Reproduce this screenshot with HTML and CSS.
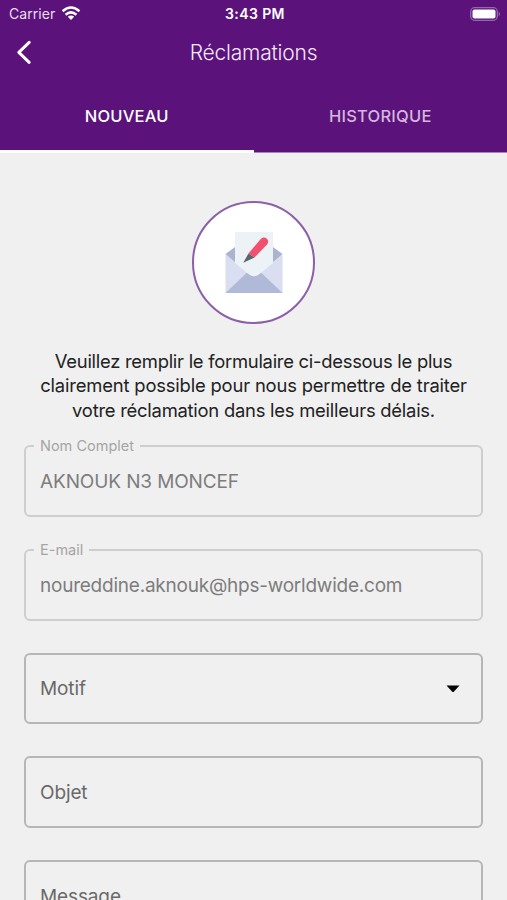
FILE: index.html
```html
<!DOCTYPE html>
<html lang="fr">
<head>
<meta charset="utf-8">
<title>Réclamations</title>
<link rel="stylesheet" href="styles.css">
</head>
<body>
<header class="header">
  <div class="status">
    <div class="carrier"><span class="carrier-name">Carrier</span>
      <svg class="wifi" width="20" height="15" viewBox="0 0 20 15" fill="none" stroke="#fff" stroke-width="2.5"><path d="M1.6 5.2Q10-2.1 18.4 5.2M4.6 8.7Q10 4.1 15.4 8.7"/><path d="M6.8 10.7Q10 8.3 13.2 10.7L10 14Z" fill="#fff" stroke="none"/></svg>
    </div>
    <span class="time">3:43 PM</span>
    <svg class="battery" width="31" height="14" viewBox="0 0 31 14"><rect x=".7" y=".7" width="26.6" height="12.6" rx="4" fill="none" stroke="#9468ad" stroke-width="1.3"/><rect x="2.5" y="2.5" width="23" height="9" rx="2" fill="#fff"/><path d="M28.7 4.5Q31.3 7 28.7 9.5Z" fill="#9468ad"/></svg>
  </div>
  <div class="navbar">
    <svg class="back" width="16" height="26" viewBox="0 0 16 26" fill="none" stroke="#fff" stroke-width="3" stroke-linecap="round" stroke-linejoin="round"><path d="M13.2 2.3L2.8 12.3L13.2 22.3"/></svg>
    <h1 class="title">Réclamations</h1>
  </div>
  <nav class="tabs">
    <a class="tab active">NOUVEAU</a>
    <a class="tab">HISTORIQUE</a>
  </nav>
</header>
<main class="content">
  <div class="badge">
    <svg width="58" height="62" viewBox="0 0 58 62"><path d="M.5 22L10 15V32ZM57.5 22L48 15V32Z" fill="#abb3d0"/><path d="M.5 22L24 42L8 56L.5 61ZM57.5 22L34 42L50 56L57.5 61Z" fill="#d9def0"/><path d="M.5 61L21.5 41H36.5L57.5 61Z" fill="#b0bad8"/><path d="M10 0H48V31L34.5 42Q29 46.5 23.5 42L10 31Z" fill="#edf2f6"/><path d="M23.5 21.5L35.5 7.2C39.5 2.8 46 8 41.8 12.8L29.5 25.5Z" fill="#f2506f"/><path d="M18.3 30.7L23.5 21.5L29.5 25.5Z" fill="#5c656c"/></svg>
  </div>
  <p class="intro"><span class="line line-a">Veuillez remplir le formulaire ci-dessous le plus</span><span class="line line-b">clairement possible pour nous permettre de traiter</span><span class="line line-c">votre réclamation dans les meilleurs délais.</span></p>
  <form class="form">
    <div class="field disabled"><label class="label">Nom Complet</label><span class="value">AKNOUK N3 MONCEF</span></div>
    <div class="field disabled"><label class="label">E-mail</label><span class="value mail">noureddine.aknouk@hps-worldwide.com</span></div>
    <div class="field"><span class="value">Motif</span><svg class="caret" width="14" height="8" viewBox="0 0 14 8"><path d="M.5.5H13.5L8 6.6Q7 7.6 6 6.6Z"/></svg></div>
    <div class="field"><span class="value">Objet</span></div>
    <div class="field"><span class="value">Message</span></div>
  </form>
</main>
</body>
</html>
```
FILE: styles.css
```css
* { box-sizing: border-box; }
body {
  margin: 0;
  height: 900px;
  overflow: hidden;
  background: #f0f0f0;
  font-family: Inter, "Liberation Sans", sans-serif;
}
.header {
  height: 153px;
  background: #5c127b;
  color: #fff;
}
.status {
  display: grid;
  grid-template-columns: 1fr auto 1fr;
  align-items: center;
  height: 27px;
  padding: 0 6px 0 9px;
}
.carrier { display: flex; align-items: center; gap: 6px; }
.carrier-name { font-size: 14px; letter-spacing: .05px; color: #eadff0; }
.time { font-size: 14px; font-weight: 600; letter-spacing: .4px; }
.battery { justify-self: end; }
.navbar {
  display: grid;
  grid-template-columns: 16px 1fr 16px;
  align-items: center;
  height: 51px;
  padding: 0 16px;
}
.title {
  margin: 0;
  text-align: center;
  font-size: 21px;
  font-weight: 300;
  letter-spacing: -.2px;
  color: #f3eaf7;
}
.tabs { display: grid; grid-template-columns: 1fr 1fr; height: 75px; }
.tab {
  display: flex;
  align-items: center;
  justify-content: center;
  padding-top: 1px;
  color: #d3b7de;
  font-size: 16.5px;
  font-weight: 500;
  letter-spacing: .22px;
  border-bottom: 1px solid #a982ba;
}
.tab.active { padding-top: 3px; color: #fff; border-bottom: 3px solid #fff; }
.content { padding: 48px 24px 0; }
.badge {
  display: flex;
  align-items: center;
  justify-content: center;
  width: 123px;
  height: 123px;
  margin: 0 auto;
  border: 2px solid #8c5fa9;
  border-radius: 50%;
  background: #fff;
}
.intro {
  margin: 25px 0 0;
  height: 96px;
  color: #222;
  text-align: center;
  font-size: 18.4px;
  line-height: 24.3px;
}
.line { display: block; white-space: nowrap; }
.line-a { letter-spacing: -.26px; }
.line-b { letter-spacing: -.17px; }
.line-c { letter-spacing: -.24px; }
.form { display: grid; gap: 32px; }
.field {
  position: relative;
  display: flex;
  align-items: center;
  justify-content: space-between;
  height: 71.8px;
  padding: 1px 21px 0 14px;
  border: 2px solid #b6b6b6;
  border-radius: 6px;
  color: #696969;
  font-size: 19px;
  letter-spacing: -.12px;
}
.disabled { border-color: #cecece; color: #7d7d7d; }
.mail { letter-spacing: -.23px; }
.label {
  position: absolute;
  left: 8px;
  top: -10px;
  padding: 0 6px;
  background: #f0f0f0;
  color: #a5a5a5;
  font-size: 14.5px;
  line-height: 18px;
  letter-spacing: 0;
}
```
